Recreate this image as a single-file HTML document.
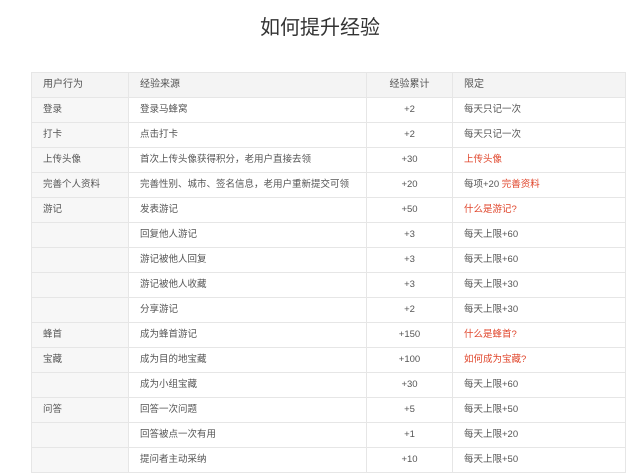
<!DOCTYPE html><html><head><meta charset="utf-8"><style>
body{margin:0;background:#fff;width:640px;height:466px;overflow:hidden;font-family:"Liberation Sans","Noto Sans CJK SC",sans-serif;color:#555}
h1{position:absolute;top:14px;left:0;width:640px;text-align:center;margin:0;font-weight:normal;font-size:20px;color:#333;line-height:28px}
table{position:absolute;top:72px;left:31px;width:595px;border-collapse:collapse;font-size:9.5px;table-layout:fixed}
tr{height:25px}
td{border:1px solid #e6e6e6;padding:0 0 0 11px;vertical-align:middle;line-height:12px}
col.a{width:97px}col.b{width:238px}col.c{width:86px}
tr td:first-child{background:#f7f7f7}
tr td:nth-child(3){text-align:center;padding:0}
tr.h td{background:#f4f4f4;font-size:10px}
.r{color:#e0452b}
</style></head><body>
<h1>如何提升经验</h1>
<table>
<colgroup><col class="a"><col class="b"><col class="c"><col></colgroup>
<tr class="h"><td>用户行为</td><td>经验来源</td><td>经验累计</td><td>限定</td></tr>
<tr><td>登录</td><td>登录马蜂窝</td><td>+2</td><td>每天只记一次</td></tr>
<tr><td>打卡</td><td>点击打卡</td><td>+2</td><td>每天只记一次</td></tr>
<tr><td>上传头像</td><td>首次上传头像获得积分，老用户直接去领</td><td>+30</td><td class="r">上传头像</td></tr>
<tr><td>完善个人资料</td><td>完善性别、城市、签名信息，老用户重新提交可领</td><td>+20</td><td>每项+20 <span class="r">完善资料</span></td></tr>
<tr><td>游记</td><td>发表游记</td><td>+50</td><td class="r">什么是游记?</td></tr>
<tr><td></td><td>回复他人游记</td><td>+3</td><td>每天上限+60</td></tr>
<tr><td></td><td>游记被他人回复</td><td>+3</td><td>每天上限+60</td></tr>
<tr><td></td><td>游记被他人收藏</td><td>+3</td><td>每天上限+30</td></tr>
<tr><td></td><td>分享游记</td><td>+2</td><td>每天上限+30</td></tr>
<tr><td>蜂首</td><td>成为蜂首游记</td><td>+150</td><td class="r">什么是蜂首?</td></tr>
<tr><td>宝藏</td><td>成为目的地宝藏</td><td>+100</td><td class="r">如何成为宝藏?</td></tr>
<tr><td></td><td>成为小组宝藏</td><td>+30</td><td>每天上限+60</td></tr>
<tr><td>问答</td><td>回答一次问题</td><td>+5</td><td>每天上限+50</td></tr>
<tr><td></td><td>回答被点一次有用</td><td>+1</td><td>每天上限+20</td></tr>
<tr><td></td><td>提问者主动采纳</td><td>+10</td><td>每天上限+50</td></tr>
</table>
</body></html>
